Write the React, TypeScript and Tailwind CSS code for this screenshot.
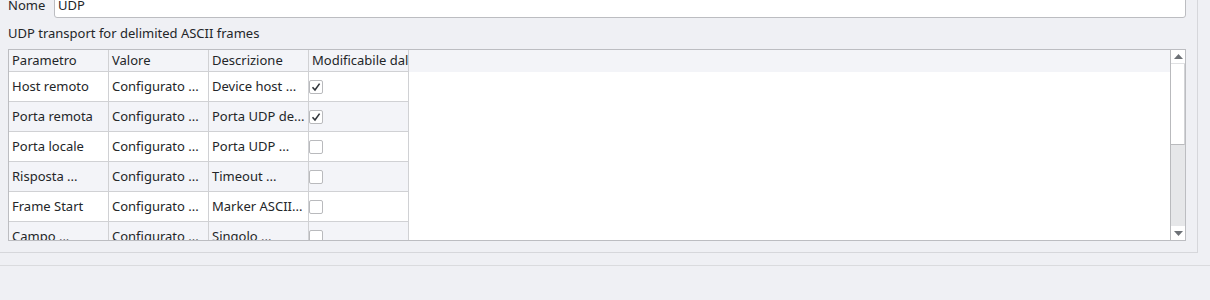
import React from 'react';

type Row = { name: string; value: string; desc: string; editable: boolean };

const rows: Row[] = [
  { name: 'Host remoto', value: 'Configurato ...', desc: 'Device host ...', editable: true },
  { name: 'Porta remota', value: 'Configurato ...', desc: 'Porta UDP de...', editable: true },
  { name: 'Porta locale', value: 'Configurato ...', desc: 'Porta UDP ...', editable: false },
  { name: 'Risposta ...', value: 'Configurato ...', desc: 'Timeout ...', editable: false },
  { name: 'Frame Start', value: 'Configurato ...', desc: 'Marker ASCII...', editable: false },
  { name: 'Campo ...', value: 'Configurato ...', desc: 'Singolo ...', editable: false },
];

const headers = ['Parametro', 'Valore', 'Descrizione', 'Modificabile dal'];

const CheckBox: React.FC<{ checked: boolean }> = ({ checked }) => (
  <div className="w-[14px] h-[14px] bg-white border border-[#b9babd] rounded-[2px] flex items-center justify-center">
    {checked && (
      <svg width="10" height="10" viewBox="0 0 10 10">
        <path d="M1.5 5.2 L4 8 L8.6 1.6" fill="none" stroke="#31363b" strokeWidth="1.6" />
      </svg>
    )}
  </div>
);

const ScrollBar: React.FC = () => (
  <div className="w-[15px] h-full border-l border-[#b9babd] flex flex-col bg-[#e6e7e9]">
    <div className="h-[14px] bg-white flex items-center justify-center border-b border-[#e0e1e3]">
      <svg width="9" height="5" viewBox="0 0 9 5">
        <path d="M0 5 L4.5 0 L9 5 Z" fill="#6d7176" />
      </svg>
    </div>
    <div className="h-[81px] bg-white border-b border-[#b9babd] border-r border-r-[#d3d4d7]" />
    <div className="flex-1" />
    <div className="h-[14px] bg-white flex items-center justify-center">
      <svg width="9" height="5" viewBox="0 0 9 5">
        <path d="M0 0 L9 0 L4.5 5 Z" fill="#6d7176" />
      </svg>
    </div>
  </div>
);

const App: React.FC = () => {
  return (
    <div className="w-[1210px] h-[300px] overflow-hidden bg-[#eff0f4] font-['Noto_Sans',sans-serif] text-[13px] text-[#232629]">
      <div className="w-[1198px] h-[253px] flex flex-col border-r border-b border-[#d6d7db] pl-2 pr-[11px]">
        <div className="flex items-center -mt-[7px] h-[25px] shrink-0">
          <span className="w-[46px]">Nome</span>
          <div className="flex-1 h-full bg-white border border-[#bcbdc1] rounded-[3px] px-[3px] flex items-center">
            UDP
          </div>
        </div>
        <div className="h-[31px] shrink-0 flex items-center">UDP transport for delimited ASCII frames</div>
        <div className="h-[192px] shrink-0 bg-white border border-[#bcbdc1] flex overflow-hidden">
          <div className="flex-1 flex flex-col overflow-hidden">
            <div className="flex h-[22px] bg-[#f3f4f8] shrink-0">
              {headers.map((h) => (
                <div
                  key={h}
                  className="w-[100px] shrink-0 border-r border-b border-[#d0d1d4] px-[3px] flex items-center whitespace-nowrap overflow-hidden"
                >
                  {h}
                </div>
              ))}
            </div>
            {rows.map((r, i) => (
              <div key={r.name} className="flex h-[30px] shrink-0">
                <div className={`flex ${i % 2 === 1 ? 'bg-[#f3f4f8]' : 'bg-white'}`}>
                  <div className="w-[100px] border-r border-b border-[#d0d1d4] px-[3px] flex items-center whitespace-nowrap overflow-hidden">
                    {r.name}
                  </div>
                  <div className="w-[100px] border-r border-b border-[#d0d1d4] px-[3px] flex items-center whitespace-nowrap overflow-hidden">
                    {r.value}
                  </div>
                  <div className="w-[100px] border-r border-b border-[#d0d1d4] px-[3px] flex items-center whitespace-nowrap overflow-hidden">
                    {r.desc}
                  </div>
                  <div className="w-[100px] border-r border-b border-[#d0d1d4] flex items-center">
                    <CheckBox checked={r.editable} />
                  </div>
                </div>
              </div>
            ))}
          </div>
          <ScrollBar />
        </div>
      </div>
      <div className="mt-[12px] border-t border-[#dadbde]" />
    </div>
  );
};

export default App;
